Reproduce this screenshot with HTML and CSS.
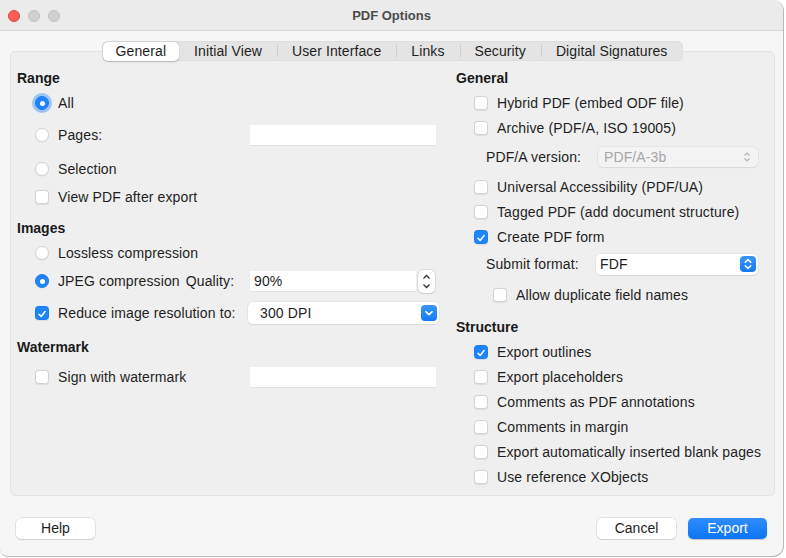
FILE: index.html
```html
<!DOCTYPE html>
<html>
<head>
<meta charset="utf-8">
<link rel="stylesheet" href="styles.css">
</head>
<body>
<div class="window">
  <div class="titlebar">
    <div class="lights">
      <span class="light red"></span>
      <span class="light"></span>
      <span class="light"></span>
    </div>
    <div class="title">PDF Options</div>
    <div></div>
  </div>
  <div class="main">
    <div class="tabs">
      <div class="tab active">General</div>
      <div class="tab">Initial View</div>
      <div class="tab sep">User Interface</div>
      <div class="tab sep">Links</div>
      <div class="tab sep">Security</div>
      <div class="tab sep">Digital Signatures</div>
    </div>
    <div class="panel">
      <div class="col left">
        <div class="heading">Range</div>
        <div class="row h25 ind"><span class="radio on focus"></span><span class="lbl">All</span></div>
        <div class="row h40 ind"><span class="opt"><span class="radio"></span><span class="lbl">Pages:</span></span><span class="field w186"></span></div>
        <div class="row h28 ind"><span class="radio"></span><span class="lbl">Selection</span></div>
        <div class="row h28 ind"><span class="check"></span><span class="lbl">View PDF after export</span></div>

        <div class="heading mt5">Images</div>
        <div class="row h25 ind"><span class="radio"></span><span class="lbl">Lossless compression</span></div>
        <div class="row h32 ind"><span class="opt"><span class="radio on"></span><span class="lbl">JPEG compression</span><span class="quality">Quality:</span></span><span class="field w166">90%</span><span class="spinner"><svg width="17" height="23" viewBox="0 0 17 23"><path d="M5.5 8.5 L8.5 5.5 L11.5 8.5" fill="none" stroke="#333" stroke-width="1.3"/><path d="M5.5 14.5 L8.5 17.5 L11.5 14.5" fill="none" stroke="#333" stroke-width="1.3"/></svg></span></div>
        <div class="row h32 ind"><span class="opt o213"><span class="check on"><svg width="14" height="14" viewBox="0 0 14 14"><path d="M3.5 7.3 L6 9.8 L10.6 4.2" fill="none" stroke="#fff" stroke-width="1.8" stroke-linecap="round" stroke-linejoin="round"/></svg></span><span class="lbl">Reduce image resolution to:</span></span><span class="select w191"><span class="sel-text">300 DPI</span><span class="blue-btn"><svg width="16" height="16" viewBox="0 0 16 16"><path d="M5 6.8 L8 9.6 L11 6.8" fill="none" stroke="#fff" stroke-width="1.6" stroke-linecap="round" stroke-linejoin="round"/></svg></span></span></div>

        <div class="heading mt6">Watermark</div>
        <div class="row h36 ind"><span class="opt"><span class="check"></span><span class="lbl">Sign with watermark</span></span><span class="field w186"></span></div>
      </div>

      <div class="col right">
        <div class="heading">General</div>
        <div class="row h25 ind"><span class="check"></span><span class="lbl">Hybrid PDF (embed ODF file)</span></div>
        <div class="row h25 ind"><span class="check"></span><span class="lbl">Archive (PDF/A, ISO 19005)</span></div>
        <div class="row h34 sub"><span class="sublbl s112">PDF/A version:</span><span class="select disabled w160"><span class="sel-text">PDF/A-3b</span><span class="updown"><svg width="16" height="16" viewBox="0 0 16 16"><path d="M5.5 6.5 L8 4 L10.5 6.5" fill="none" stroke="#b4b4b4" stroke-width="1.2"/><path d="M5.5 9.5 L8 12 L10.5 9.5" fill="none" stroke="#b4b4b4" stroke-width="1.2"/></svg></span></span></div>
        <div class="row h25 ind"><span class="check"></span><span class="lbl">Universal Accessibility (PDF/UA)</span></div>
        <div class="row h25 ind"><span class="check"></span><span class="lbl">Tagged PDF (add document structure)</span></div>
        <div class="row h25 ind"><span class="check on"><svg width="14" height="14" viewBox="0 0 14 14"><path d="M3.5 7.3 L6 9.8 L10.6 4.2" fill="none" stroke="#fff" stroke-width="1.8" stroke-linecap="round" stroke-linejoin="round"/></svg></span><span class="lbl">Create PDF form</span></div>
        <div class="row h30 sub"><span class="sublbl s110">Submit format:</span><span class="select w162"><span class="sel-text">FDF</span><span class="blue-btn"><svg width="16" height="16" viewBox="0 0 16 16"><path d="M5.2 6.3 L8 3.6 L10.8 6.3" fill="none" stroke="#fff" stroke-width="1.5" stroke-linecap="round" stroke-linejoin="round"/><path d="M5.2 9.7 L8 12.4 L10.8 9.7" fill="none" stroke="#fff" stroke-width="1.5" stroke-linecap="round" stroke-linejoin="round"/></svg></span></span></div>
        <div class="row h32 sub2"><span class="check"></span><span class="lbl">Allow duplicate field names</span></div>

        <div class="heading mt4">Structure</div>
        <div class="row h25 ind"><span class="check on"><svg width="14" height="14" viewBox="0 0 14 14"><path d="M3.5 7.3 L6 9.8 L10.6 4.2" fill="none" stroke="#fff" stroke-width="1.8" stroke-linecap="round" stroke-linejoin="round"/></svg></span><span class="lbl">Export outlines</span></div>
        <div class="row h25 ind"><span class="check"></span><span class="lbl">Export placeholders</span></div>
        <div class="row h25 ind"><span class="check"></span><span class="lbl">Comments as PDF annotations</span></div>
        <div class="row h25 ind"><span class="check"></span><span class="lbl">Comments in margin</span></div>
        <div class="row h25 ind"><span class="check"></span><span class="lbl">Export automatically inserted blank pages</span></div>
        <div class="row h25 ind"><span class="check"></span><span class="lbl">Use reference XObjects</span></div>
      </div>
    </div>
    <div class="footer">
      <div class="btn">Help</div>
      <div class="spacer"></div>
      <div class="btn">Cancel</div>
      <div class="btn primary">Export</div>
    </div>
  </div>
</div>
</body>
</html>
```
FILE: styles.css
```css
* { box-sizing: border-box; }
html, body { margin: 0; padding: 0; }
body {
  background: #ffffff;
  font-family: "Liberation Sans", Arial, sans-serif;
  font-size: 14px;
  color: #1e1e1e;
  width: 786px;
  height: 558px;
  overflow: hidden;
}
.window {
  width: 784px;
  height: 557px;
  background: #f6f6f6;
  border-right: 1px solid #b9b9b9;
  border-bottom: 1px solid #b9b9b9;
  border-radius: 0 11px 11px 8px;
  overflow: hidden;
}
.titlebar {
  height: 31px;
  background: #ebebeb;
  border-bottom: 1px solid #d6d6d6;
  display: grid;
  grid-template-columns: 1fr auto 1fr;
  align-items: center;
}
.lights { display: flex; gap: 8px; padding-left: 8px; padding-top: 1px; }
.light {
  width: 12px; height: 12px; border-radius: 50%;
  background: #cfcfcf;
  border: 0.5px solid #c2c2c2;
}
.light.red { background: #fe5f57; border-color: #e14640; }
.title {
  font-size: 13px;
  font-weight: bold;
  color: #4b4b4b;
}
.main { padding: 10px 8px 0 10px; }
.tabs {
  display: flex;
  width: max-content;
  margin: 0 auto -10px;
  position: relative;
  z-index: 1;
  background: #e4e4e4;
  border-radius: 6px;
  height: 20px;
  padding: 0 1px;
  box-shadow: inset 0 0 0 0.5px #d8d8d8;
  letter-spacing: 0.1px;
}
.tab {
  height: 20px;
  line-height: 20px;
  padding: 0 15px;
  color: #1e1e1e;
  position: relative;
}
.tab.sep::before {
  content: "";
  position: absolute;
  left: 0; top: 4px;
  width: 1px; height: 12px;
  background: #cdcdcd;
}
.tab.active {
  background: #ffffff;
  border-radius: 5px;
  height: 19px;
  margin-top: 0.5px;
  line-height: 19px;
  padding: 0 13px 0 13px;
  box-shadow: 0 0.5px 1.5px rgba(0,0,0,0.25);
}
.panel {
  height: 445px;
  background: #efefef;
  border: 1px solid #e3e3e3;
  border-radius: 5px;
  padding: 14px 0 0 6px;
  display: grid;
  grid-template-columns: 439px 1fr;
}
.col { display: flex; flex-direction: column; }
.heading {
  height: 24px;
  line-height: 24px;
  font-weight: bold;
  font-size: 14px;
  color: #1a1a1a;
}
.mt4 { margin-top: 4px; }
.mt5 { margin-top: 5px; }
.mt6 { margin-top: 6px; }
.row { display: flex; align-items: center; letter-spacing: 0.12px; }
.h25 { height: 25px; }
.h28 { height: 28px; }
.h30 { height: 30px; }
.h32 { height: 32px; }
.h34 { height: 34px; }
.h36 { height: 36px; }
.h40 { height: 40px; }
.ind { padding-left: 18px; }
.sub { padding-left: 30px; }
.sub2 { padding-left: 37px; }
.lbl { margin-left: 9px; white-space: nowrap; }
.opt { display: flex; align-items: center; width: 215px; flex: none; }
.opt.o213 { width: 213px; }
.quality { margin-left: 6px; }
.radio {
  width: 14px; height: 14px; border-radius: 50%;
  background: #ffffff;
  border: 0.5px solid #d4d4d4;
  box-shadow: 0 0.5px 1px rgba(0,0,0,0.08);
  flex: none;
  position: relative;
}
.radio.on {
  background: #1d84fb;
  border-color: #1a7cf0;
}
.radio.on::after {
  content: "";
  position: absolute;
  left: 4px; top: 4px;
  width: 5px; height: 5px;
  border-radius: 50%;
  background: #ffffff;
}
.radio.focus { box-shadow: 0 0 0 3px rgba(90,160,250,0.55); }
.check {
  width: 14px; height: 14px; border-radius: 3.5px;
  background: #ffffff;
  border: 0.5px solid #d2d2d2;
  box-shadow: 0 0.5px 1px rgba(0,0,0,0.08);
  flex: none;
  display: flex;
}
.check.on { background: #1d84fb; border-color: #1a7cf0; }
.check svg { display: block; }
.field {
  height: 20px;
  background: #ffffff;
  box-shadow: 0 1px 0 #e1e1e1;
  padding-left: 4px;
  line-height: 20px;
  flex: none;
}
.w186 { width: 186px; }
.w166 { width: 166px; }
.w191 { width: 191px; }
.w160 { width: 160px; }
.w162 { width: 162px; }
.spinner {
  margin-left: 2px;
  width: 17px; height: 23px;
  background: #ffffff;
  border-radius: 5px;
  box-shadow: 0 0 0 0.5px #c8c8c8, 0 1px 1px rgba(0,0,0,0.12);
  display: flex;
}
.select {
  height: 21px;
  background: #ffffff;
  border-radius: 5px;
  box-shadow: 0 0 0 0.5px #dcdcdc, 0 1px 1px rgba(0,0,0,0.1);
  display: flex;
  align-items: center;
  justify-content: space-between;
  padding: 0 2px 0 12px;
  flex: none;
}
.select.w191 { height: 22px; padding-left: 12px; padding-right: 2px; }
.select.disabled {
  background: #f3f3f3;
  color: #a6a6a6;
  height: 20px;
  padding-left: 6px;
  padding-right: 3px;
}
.select.w162 { padding-left: 4px; }
.blue-btn {
  width: 16px; height: 16px;
  border-radius: 4px;
  background: linear-gradient(#3b96fd, #1479f3);
  display: flex;
}
.updown { width: 16px; height: 16px; display: flex; }
.sublbl { white-space: nowrap; flex: none; }
.s112 { width: 112px; }
.s110 { width: 110px; }
.footer {
  display: flex;
  gap: 12px;
  margin-top: 22px;
  padding-left: 6px;
  padding-right: 8px;
}
.spacer { flex: 1; }
.btn {
  width: 79px;
  height: 21px;
  line-height: 21px;
  text-align: center;
  background: #ffffff;
  border-radius: 5px;
  box-shadow: 0 0 0 0.5px #d0d0d0, 0 1px 1px rgba(0,0,0,0.15);
  color: #1e1e1e;
}
.btn.primary {
  background: linear-gradient(#2f8dfd, #0b75f4);
  color: #ffffff;
  box-shadow: 0 0.5px 1px rgba(0,0,0,0.2);
}
```
